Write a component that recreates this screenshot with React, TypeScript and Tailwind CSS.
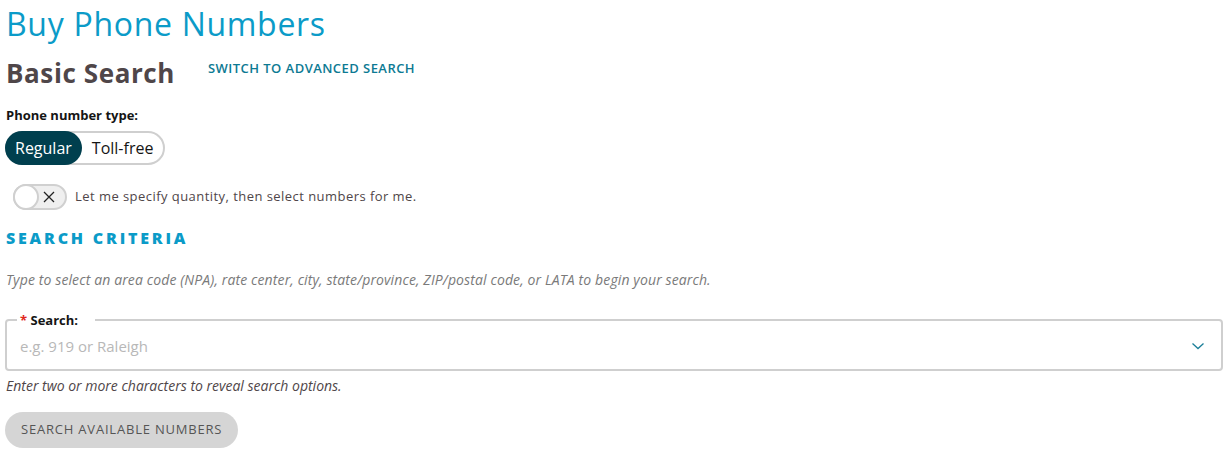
import { useState } from 'react'

export default function App() {
  const [type, setType] = useState<'regular' | 'tollfree'>('regular')
  const [auto, setAuto] = useState(false)

  return (
    <div className="min-h-[455px] bg-white px-[6px] pt-[2px] font-['Open_Sans',sans-serif] text-[#151515]">
      <h1 className="text-[32px] leading-[44px] font-normal tracking-[0.7px] text-[#0b9bc8]">Buy Phone Numbers</h1>

      <div className="mt-[11px] flex items-center">
        <h2 className="text-[26px] leading-[32px] font-bold tracking-[0.6px] text-[#4f4649]">Basic Search</h2>
        <a href="#" className="ml-[33px] -mt-[8px] text-[13px] font-semibold tracking-[0.45px] text-[#0d7a93]">
          SWITCH TO ADVANCED SEARCH
        </a>
      </div>

      <div className="mt-[17px] text-[13px] font-bold leading-[18px]">Phone number type:</div>
      <div className="mt-[7px] -ml-px inline-flex h-[34px] rounded-full border-2 border-[#cfcfcf]">
        <button
          onClick={() => setType('regular')}
          className={
            type === 'regular'
              ? '-my-[2px] -ml-[2px] rounded-full bg-[#003f4e] px-[10px] text-[16px] text-white'
              : 'px-[10px] text-[16px] text-[#151515]'
          }
        >
          Regular
        </button>
        <button
          onClick={() => setType('tollfree')}
          className={
            type === 'tollfree'
              ? '-my-[2px] -mr-[2px] rounded-full bg-[#003f4e] px-[10px] text-[16px] text-white'
              : 'px-[10px] text-[16px] text-[#151515]'
          }
        >
          Toll-free
        </button>
      </div>

      <div className="mt-[19px] ml-[7px] flex items-center gap-[8px]">
        <button
          onClick={() => setAuto(!auto)}
          className="relative h-[26px] w-[54px] rounded-full border-2 border-[#d0d0d0] bg-[#efefef]"
        >
          <span className="absolute -left-[2px] -top-[2px] h-[26px] w-[26px] rounded-full border-2 border-[#d0d0d0] bg-white" />
          <svg className="absolute right-[9px] top-[4px] h-[14px] w-[14px]" viewBox="0 0 14 14" fill="none" stroke="#222" strokeWidth="1.3">
            <path d="M2 2l10 10M12 2L2 12" />
          </svg>
        </button>
        <span className="text-[13px] tracking-[0.45px] text-[#4f4649]">Let me specify quantity, then select numbers for me.</span>
      </div>

      <h3 className="mt-[16px] text-[16px] font-extrabold tracking-[2.8px] text-[#0b9bc8]">SEARCH CRITERIA</h3>

      <p className="mt-[19px] text-[14px] italic tracking-[0.12px] text-[#7a7a7a]">
        Type to select an area code (NPA), rate center, city, state/province, ZIP/postal code, or LATA to begin your search.
      </p>

      <fieldset className="mt-[23px] -ml-px -mr-[1px] h-[58px] rounded-[4px] border-2 border-[#cfcfcf] pl-[13px] pr-[16px]">
        <legend className="-ml-[3px] pl-[3px] pr-[17px] text-[13px] font-bold leading-[14px]">
          <span className="text-[#e0281e]">*</span> Search:
        </legend>
        <div className="flex items-center">
          <input
            placeholder="e.g. 919 or Raleigh"
            className="h-[38px] flex-1 bg-transparent text-[15px] outline-none placeholder:text-[#b8b8b8]"
          />
          <svg className="h-[14px] w-[14px]" viewBox="0 0 14 14" fill="none" stroke="#1b7f99" strokeWidth="1.3">
            <path d="M1.5 4.5L7 9.5l5.5-5" />
          </svg>
        </div>
      </fieldset>

      <p className="mt-[4px] text-[14px] italic text-[#4f4649]">Enter two or more characters to reveal search options.</p>

      <button className="mt-[16px] -ml-px h-[36px] rounded-full bg-[#d5d5d5] px-[16px] text-[13px] font-medium tracking-[0.8px] text-[#555]">
        SEARCH AVAILABLE NUMBERS
      </button>
    </div>
  )
}
